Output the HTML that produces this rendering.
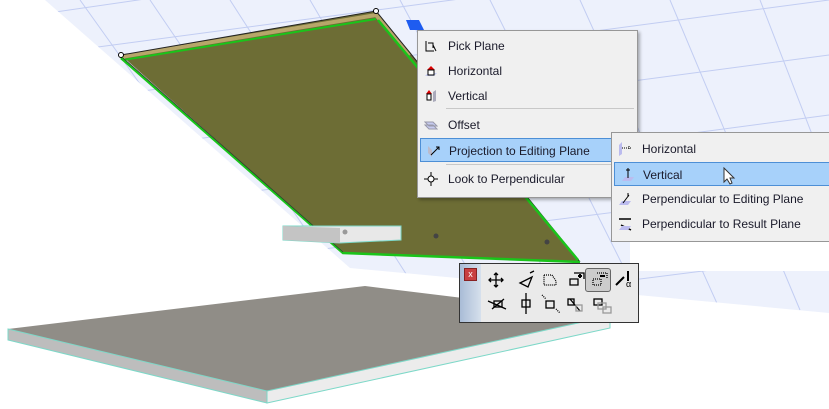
<!DOCTYPE html>
<html><head><style>
body{margin:0;width:829px;height:409px;overflow:hidden;background:#fff;position:relative;font-family:"Liberation Sans",sans-serif;font-size:12px;color:#1a1a2a}
.m{position:absolute;background:#f0f0f0;border:1px solid #979797;box-shadow:2px 2px 3px rgba(0,0,0,.3)}
.it{position:absolute;left:0;height:24px;line-height:24px;padding-left:30px;white-space:nowrap}
.hl{background:#a7d1fa;border:1px solid #4d8fd6;box-sizing:border-box}
.ic{position:absolute;left:6px;top:5px;width:14px;height:14px}
.sep{position:absolute;height:1px;background:#c8c8c8}
.tb{position:absolute;left:459px;top:263px;width:178px;height:58px;background:#eaeaea;border:1px solid #333}
.tb svg{position:absolute}
</style></head><body>
<svg width="829" height="409" style="position:absolute;left:0;top:0">
<defs><clipPath id="c"><polygon points="45,0 829,0 829,313 350,268"/></clipPath></defs>
<polygon points="45,0 829,0 829,313 350,268" fill="#edf1fc"/>
<g clip-path="url(#c)" stroke="#c2cdf2" stroke-width="1">
<line x1="0" y1="20" x2="829" y2="-100"/><line x1="0" y1="60" x2="829" y2="-50"/><line x1="0" y1="110" x2="829" y2="0"/><line x1="0" y1="165" x2="829" y2="55"/><line x1="0" y1="225" x2="829" y2="115"/><line x1="0" y1="290" x2="829" y2="185"/><line x1="0" y1="360" x2="829" y2="255"/>
<line x1="80" y1="0" x2="280" y2="280"/><line x1="150" y1="0" x2="340" y2="280"/><line x1="230" y1="0" x2="410" y2="280"/><line x1="310" y1="0" x2="480" y2="290"/><line x1="400" y1="0" x2="560" y2="300"/><line x1="490" y1="0" x2="640" y2="300"/><line x1="580" y1="0" x2="720" y2="310"/><line x1="670" y1="0" x2="800" y2="310"/><line x1="760" y1="0" x2="880" y2="310"/>
</g>
<polygon points="8,329 365,286 610,316 267,391" fill="#908d87"/>
<polygon points="8,329 267,391 267,403 8,340" fill="#bdbdbd" stroke="#7dd8c8" stroke-width="1"/>
<polygon points="267,391 610,316 610,328 267,403" fill="#ececec" stroke="#7dd8c8" stroke-width="1"/>
<polygon points="121,55 376,11 580,262 343,253" fill="#6d6d35"/>
<polyline points="121,57 376,15 410,55" fill="none" stroke="#b7a66a" stroke-width="4"/>
<polyline points="121,55 376,11 580,262" fill="none" stroke="#222" stroke-width="1"/>
<polyline points="123,60 376,19" fill="none" stroke="#1ac41a" stroke-width="2"/>
<polyline points="121,58 343,253 580,262" fill="none" stroke="#1ac41a" stroke-width="2.5"/>
<line x1="378" y1="20" x2="578" y2="260" stroke="#1ac41a" stroke-width="2.5"/>
<line x1="123" y1="58" x2="343" y2="252" stroke="#333" stroke-width=".7"/>
<circle cx="121" cy="55" r="2.5" fill="#fff" stroke="#000"/><circle cx="376" cy="11" r="2.5" fill="#fff" stroke="#000"/>
<polygon points="283,226 401,226 401,240 340,243 283,240" fill="#e8e8e8" stroke="#7dd8c8"/>
<polygon points="283,226 340,228 340,243 283,240" fill="#c4c4c4"/>
<circle cx="345" cy="232" r="2.5" fill="#999"/><circle cx="436" cy="236" r="2.5" fill="#444"/><circle cx="547" cy="242" r="2.5" fill="#444"/>
<polygon points="406,20 419,20 424,30 410,30" fill="#1e5cf0"/>
<rect x="630" y="240" width="199" height="31" fill="#fff"/>
</svg>

<div class="m" style="left:417px;top:30px;width:219px;height:166px">
 <div class="it" style="top:3px">Pick Plane<svg class="ic" viewBox="0 0 14 14"><path d="M2 2V12H10M4 4H9V9M9 6L12 12" stroke="#000" fill="none"/></svg></div>
 <div class="it" style="top:28px">Horizontal<svg class="ic" viewBox="0 0 14 14"><path d="M1 12L4 9H13L10 12Z" fill="#c6cbf0"/><path d="M3 6L7 2L11 6Z" fill="#d00"/><rect x="4" y="6" width="6" height="5" fill="#fff" stroke="#000"/></svg></div>
 <div class="it" style="top:53px">Vertical<svg class="ic" viewBox="0 0 14 14"><path d="M2 5L5 1L8 5Z" fill="#d00"/><rect x="3" y="5" width="4" height="6" fill="#fff" stroke="#000"/><path d="M9 3L12 1V12L9 13Z" fill="#aab"/></svg></div>
 <div class="sep" style="left:28px;top:77px;width:188px"></div>
 <div class="it" style="top:82px">Offset<svg class="ic" viewBox="0 0 14 14"><path d="M1 4H9L13 8H5Z M1 7H9L13 11H5Z" fill="#c6cbf0" stroke="#99a"/></svg></div>
 <div class="it hl" style="top:107px;left:2px;width:193px;padding-left:28px">Projection to Editing Plane<svg class="ic" viewBox="0 0 14 14"><path d="M1 2L5 6V13L1 9Z" fill="#bbc"/><path d="M4 11L12 3M9 3H12V6" stroke="#000" fill="none"/></svg><span style="position:absolute;right:-12px;top:0;color:#fff;font-size:9px">▶</span></div>
 <div class="sep" style="left:28px;top:133px;width:188px"></div>
 <div class="it" style="top:136px">Look to Perpendicular<svg class="ic" viewBox="0 0 14 14"><path d="M7 0V14M0 7H14" stroke="#000"/><circle cx="7" cy="7" r="3" fill="#fff" stroke="#000"/></svg></div>
</div>

<div class="m" style="left:611px;top:132px;width:222px;height:108px;border-right:none;box-shadow:none">
 <div class="it" style="top:4px">Horizontal<svg class="ic" viewBox="0 0 14 14"><path d="M1 3L4 0V12L1 14Z" fill="#bbe"/><path d="M4 6H13M11 4V8" stroke="#000" stroke-dasharray="1 1"/></svg></div>
 <div class="it hl" style="top:29px;left:2px;width:216px;padding-left:28px">Vertical<svg class="ic" viewBox="0 0 14 14"><path d="M1 13L4 9H13L10 13Z" fill="#bbe"/><path d="M7 0V10M5 2H9" stroke="#000"/></svg><svg style="position:absolute;left:108px;top:4px" width="14" height="18" viewBox="0 0 14 18"><path d="M1 1V15L4 12L7 17L9 16L7 11H11Z" fill="#fff" stroke="#333"/></svg></div>
 <div class="it" style="top:54px">Perpendicular to Editing Plane<svg class="ic" viewBox="0 0 14 14"><path d="M1 13L4 9H13L10 13Z" fill="#bbe"/><path d="M5 11L11 3M10 1V5" stroke="#000"/></svg></div>
 <div class="it" style="top:79px">Perpendicular to Result Plane<svg class="ic" viewBox="0 0 14 14"><path d="M1 2H13M3 8L13 13" stroke="#000" stroke-width="1.5"/><path d="M1 13L4 9H13L10 13Z" fill="#bbe"/></svg></div>
</div>

<div class="tb">
 <div style="position:absolute;left:0;top:0;width:21px;height:58px;background:linear-gradient(90deg,#a9bcd6,#d6e0ec)"></div>
 <div style="position:absolute;left:4px;top:4px;width:11px;height:11px;background:#c84040;border:1px solid #822;color:#fff;font-size:9px;line-height:11px;text-align:center">x</div>
 <div style="position:absolute;left:125px;top:4px;width:24px;height:22px;background:#ccc;border:1px solid #666;border-radius:3px"></div>
 <svg style="left:26px;top:5px" width="150" height="50" viewBox="0 0 150 50" fill="none" stroke="#000" stroke-width="1.3">
  <path d="M10 4V18M3 11H17M8 6L10 4L12 6M8 16L10 18L12 16M5 9L3 11L5 13M15 9L17 11L15 13"/>
  <path d="M34 14L46 8L42 18ZM44 4L48 2"/>
  <path d="M58 6H66L70 12V16H58Z" stroke-dasharray="1 1"/>
  <path d="M84 10H92V16H84ZM88 4H98V10" /><path d="M92 7H96M94 5V9" stroke-width="2"/>
  <path d="M107 10H115V16H107ZM111 4H121V10" stroke-dasharray="1 1"/><path d="M114 7H119" stroke-width="2"/>
  <path d="M130 16L138 8M142 2V12" stroke-width="2"/><text x="140" y="18" font-size="9" fill="#000" stroke="none">α</text>
  <path d="M2 32L20 40M6 40L18 30"/><rect x="8" y="32" width="8" height="6"/>
  <rect x="36" y="31" width="8" height="7"/><path d="M40 24V45"/>
  <rect x="60" y="32" width="8" height="7"/><path d="M56 26L60 30M70 40L74 44" stroke-dasharray="1 1"/>
  <path d="M84 30L94 42" /><rect x="82" y="30" width="6" height="6"/><rect x="90" y="36" width="6" height="6" stroke="#999"/>
  <rect x="108" y="30" width="8" height="6"/><rect x="112" y="34" width="8" height="6" stroke="#999"/><rect x="117" y="38" width="8" height="6" stroke="#999"/>
 </svg>
</div>
</body></html>
